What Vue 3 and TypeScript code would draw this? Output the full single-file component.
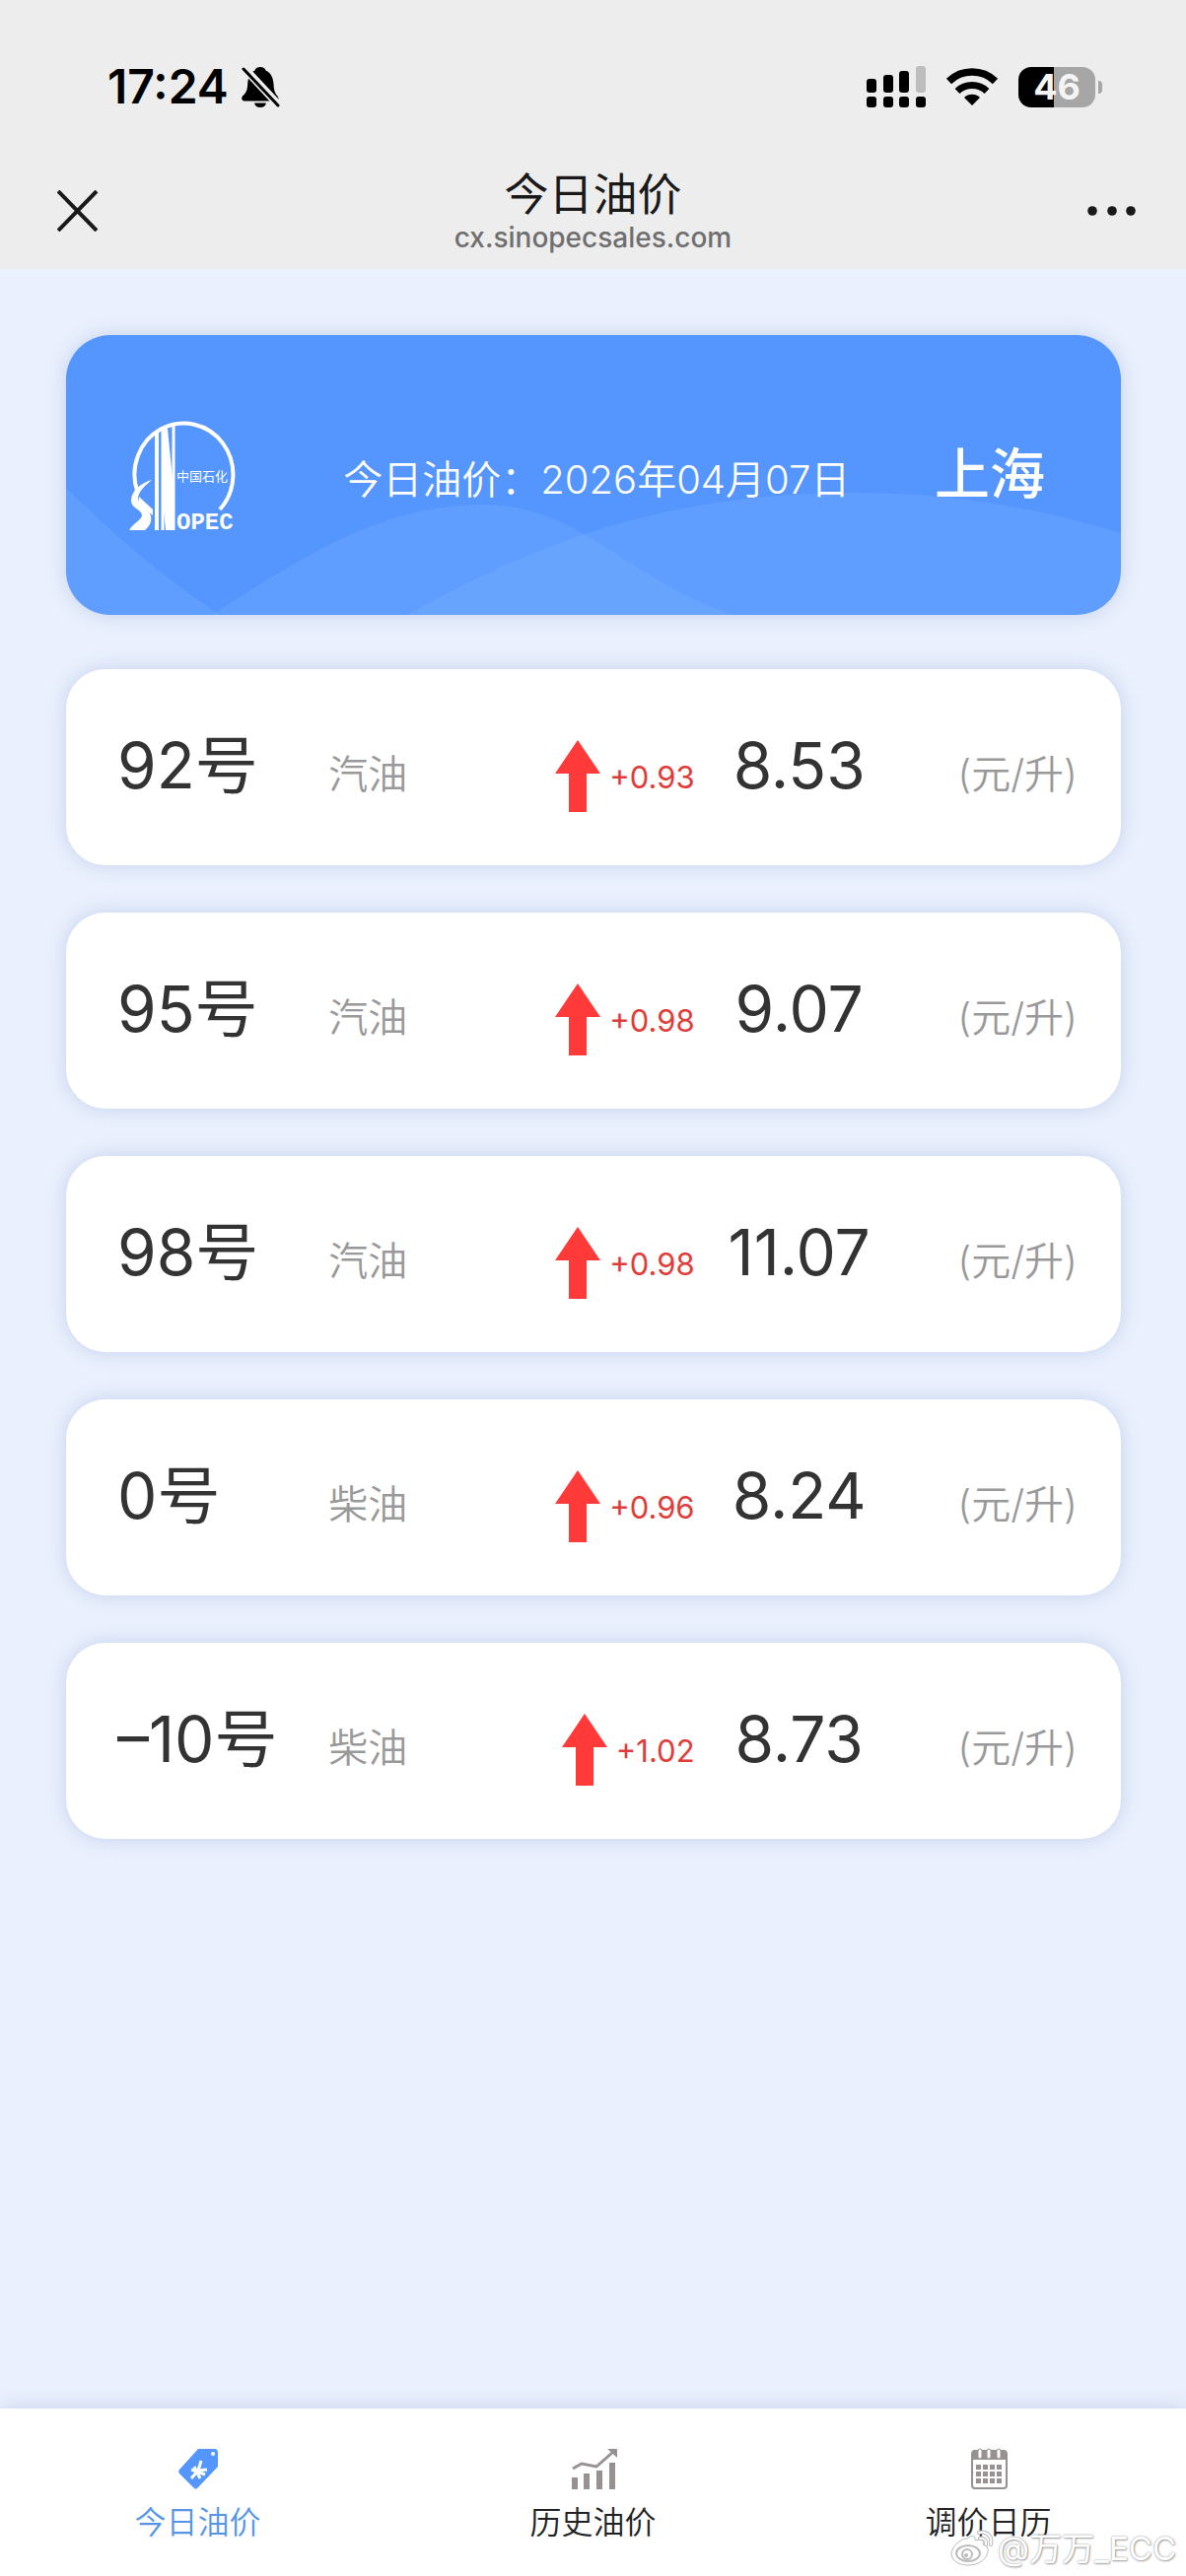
<script setup lang="ts">
import { ref } from 'vue'

interface FuelPrice {
  grade: string
  kind: string
  change: string
  price: string
}

interface Tab {
  id: 'today' | 'history' | 'calendar'
  label: string
}

const date = '2026年04月07日'
const city = '上海'

const prices: FuelPrice[] = [
  { grade: '92号', kind: '汽油', change: '+0.93', price: '8.53' },
  { grade: '95号', kind: '汽油', change: '+0.98', price: '9.07' },
  { grade: '98号', kind: '汽油', change: '+0.98', price: '11.07' },
  { grade: '0号', kind: '柴油', change: '+0.96', price: '8.24' },
  { grade: '–10号', kind: '柴油', change: '+1.02', price: '8.73' },
]

const tabs: Tab[] = [
  { id: 'today', label: '今日油价' },
  { id: 'history', label: '历史油价' },
  { id: 'calendar', label: '调价日历' },
]

const active = ref<Tab['id']>('today')
const calendarCols = [11, 18, 25, 32]
const calendarRows = [17, 24, 31]
</script>

<template>
  <div class="page">
    <header class="top">
      <div class="status">
        <div class="clock">
          <span class="time">17:24</span>
          <svg class="bell" viewBox="0 0 40 42" aria-hidden="true">
            <path d="M19 1c3 0 5 1.500 5.500 3.500C30 7 32 12 32.500 18c.3 6 1 9 4 12.500 1.500 2 1.500 5-1 5H3c-3 0-3.500-3-2-5C5 27 6 24 6.200 18 6.500 11 8.500 6.500 13.500 4.500 14 2.500 16 1 19 1z" />
            <path d="M13 37.500h12c-.5 3-3 4.500-6 4.500s-5.500-1.500-6-4.500z" />
            <path d="M3 2.500 38 40" stroke="#ededed" stroke-width="8" />
            <path d="M2 3 37 40" stroke="#000" stroke-width="3" stroke-linecap="round" />
          </svg>
        </div>
        <div class="indicators">
          <svg class="signal" viewBox="0 0 60 42" aria-hidden="true">
            <rect x="0" y="13" width="10" height="14" rx="3" />
            <rect x="17" y="9" width="10" height="18" rx="3" />
            <rect x="33" y="5" width="10" height="22" rx="3" />
            <rect x="50" y="0" width="10" height="27" rx="3" fill="#bdbdbd" />
            <rect x="0" y="31" width="10" height="11" rx="3" />
            <rect x="17" y="31" width="10" height="11" rx="3" />
            <rect x="33" y="31" width="10" height="11" rx="3" />
            <rect x="50" y="31" width="10" height="11" rx="3" />
          </svg>
          <svg class="wifi" viewBox="0 0 54 40" aria-hidden="true">
            <path d="M3.500 14.500a34 34 0 0 1 47 0" fill="none" stroke="#000" stroke-width="7.500" />
            <path d="M12 24.500a22 22 0 0 1 30 0" fill="none" stroke="#000" stroke-width="7" />
            <path d="M27 39 19 31a11.500 11.500 0 0 1 16 0z" />
          </svg>
          <div class="battery"><span class="cell">46</span><span class="nub"></span></div>
        </div>
      </div>
      <div class="nav">
        <button class="icon-button" type="button" aria-label="关闭">
          <svg class="close" viewBox="0 0 42 42" aria-hidden="true">
            <path d="M1 1 40 41M40 1 1 41" fill="none" stroke="#191919" stroke-width="4" />
          </svg>
        </button>
        <div class="heading">
          <h1 class="title">今日油价</h1>
          <p class="host">cx.sinopecsales.com</p>
        </div>
        <button class="icon-button" type="button" aria-label="更多">
          <svg class="more" viewBox="0 0 50 10" aria-hidden="true">
            <circle cx="5" cy="5" r="4.800" />
            <circle cx="25" cy="5" r="4.800" />
            <circle cx="44" cy="5" r="4.800" />
          </svg>
        </button>
      </div>
    </header>

    <main class="content">
      <section class="hero">
        <svg class="waves" viewBox="0 0 1070 284" preserveAspectRatio="none" aria-hidden="true">
          <path d="M0 155C50 205 105 250 156 284H0z" />
          <path d="M148 284C240 225 320 172 422 172S570 250 678 284z" />
          <path d="M346 284C470 215 600 160 800 160 900 160 990 176 1070 201V284z" />
        </svg>
        <svg class="logo" viewBox="0 0 108 112" role="img" aria-label="中国石化 SINOPEC">
          <g fill="none" stroke="#fff">
            <path d="M8 70A50 52 0 1 1 92 89" stroke-width="4" />
            <path d="M28 11V110" stroke-width="4" />
            <path d="M34 8V110" stroke-width="3" />
            <path d="M45 4V110" stroke-width="3" />
          </g>
          <g fill="#fff">
            <path d="M35 7h4l6 60V110h-8L35 90z" />
            <path d="M23 59C12 62 2 70 2 80c0 8 11 9 11 15 0 4-9 8-13 15h16c6-5 8-11 5-17C18 86 8 84 9 77c1-7 8-13 14-18z" />
            <path d="M10 76 24 89v6L9 83z" />
          </g>
          <text class="script" x="48" y="60">中国石化</text>
          <text class="wordmark" x="48" y="109">OPEC</text>
        </svg>
        <p class="date">今日油价：{{ date }}</p>
        <a class="city" href="#">{{ city }}</a>
      </section>

      <ul class="prices">
        <li v-for="item in prices" :key="item.grade" class="card">
          <span class="grade">{{ item.grade }}</span>
          <span class="kind">{{ item.kind }}</span>
          <span class="change">
            <svg class="arrow" viewBox="0 0 46 73" aria-hidden="true">
              <path d="M23 0 46 34H32V73H14V34H0z" />
            </svg>{{ item.change }}
          </span>
          <span class="price">{{ item.price }}</span>
          <span class="unit">(元/升)</span>
        </li>
      </ul>
    </main>

    <nav class="tabs">
      <button
        v-for="tab in tabs"
        :key="tab.id"
        type="button"
        class="tab"
        :class="{ active: tab.id === active }"
        @click="active = tab.id"
      >
        <svg v-if="tab.id === 'today'" class="tab-icon" viewBox="0 0 48 42" aria-hidden="true">
          <path d="M24 1h16c3 0 4 1 4 4v14L24 40c-2 2-3 2-5 0L5 26c-1-1-1-3 0-4z" fill="#5396fe" />
          <path d="M27 13 24 23M33 22 24 23M24 23 17 31M17 22 31 27M20 19 26 31" fill="none" stroke="#fff" stroke-width="3" />
          <circle cx="39" cy="6" r="2" fill="#fff" />
        </svg>
        <svg v-else-if="tab.id === 'history'" class="tab-icon" viewBox="0 0 48 42" aria-hidden="true">
          <g fill="#989191">
            <path d="M2 30h6v12H2zM14 26h6v16h-6zM27 23h6v19h-6zM40 15h6v27h-6z" />
            <path d="M38 1h10v9z" />
          </g>
          <path d="M3 21 12 16 27 19 44 4" fill="none" stroke="#989191" stroke-width="3" />
        </svg>
        <svg v-else class="tab-icon" viewBox="0 0 48 42" aria-hidden="true">
          <rect x="7" y="5" width="35" height="36" rx="3" fill="#fff" stroke="#989191" stroke-width="2" />
          <path d="M6 12V7c0-3 1-5 4-5h29c3 0 4 2 4 5v5z" fill="#989191" />
          <g fill="#fff" stroke="#989191">
            <rect x="13" y="1" width="4" height="10" rx="2" />
            <rect x="22" y="1" width="4" height="10" rx="2" />
            <rect x="32" y="1" width="4" height="10" rx="2" />
          </g>
          <g fill="#989191">
            <template v-for="y in calendarRows" :key="y">
              <rect v-for="x in calendarCols" :key="x" :x="x" :y="y" width="5" height="5" />
            </template>
          </g>
        </svg>
        <span>{{ tab.label }}</span>
      </button>
    </nav>

    <div class="watermark">
      <svg class="weibo" viewBox="0 0 44 38" aria-hidden="true">
        <path d="M17 9c5-4 9-3 8 2 6-2 10 0 8 4 4 1 6 4 5 8-2 8-10 13-20 13S1 31 1 24C1 18 10 9 17 9z" fill="#fff" stroke="#bbb" />
        <ellipse cx="18" cy="24" rx="12" ry="8" fill="#fff" stroke="#bbb" stroke-width="2" />
        <circle cx="17" cy="25" r="5" fill="#fff" stroke="#bbb" stroke-width="2" />
        <circle cx="16" cy="26" r="2" fill="#bbb" />
        <path d="M29 3c8-2 14 4 12 12M30 9c4-1 7 2 6 6" fill="none" stroke="#bbb" stroke-width="4" stroke-linecap="round" />
        <path d="M29 3c8-2 14 4 12 12M30 9c4-1 7 2 6 6" fill="none" stroke="#fff" stroke-width="2" stroke-linecap="round" />
      </svg>
      <span>@万万_ECC</span>
    </div>
  </div>
</template>

<style>
body {
  margin: 0;
}
</style>

<style scoped>
.page {
  position: relative;
  display: flex;
  flex-direction: column;
  min-height: 100vh;
  background: #eaf0fd;
  color: #333;
  font-family: Inter, "Noto Sans CJK SC", sans-serif;
}

h1,
p,
ul {
  margin: 0;
  padding: 0;
  font-weight: 400;
}

button {
  padding: 0;
  border: 0;
  background: none;
  font: inherit;
  color: inherit;
}

.top {
  background: #ededed;
}

.status {
  display: flex;
  align-items: center;
  justify-content: space-between;
  padding: 58px 85px 0 109px;
  height: 60px;
}

.clock,
.indicators {
  display: flex;
  align-items: center;
}

.clock {
  gap: 13px;
}

.time {
  color: #000;
  font-size: 48px;
  font-weight: 600;
  line-height: 60px;
}

.bell {
  width: 40px;
  height: 42px;
}

.indicators {
  gap: 20px;
}

.signal {
  width: 60px;
  height: 42px;
}

.wifi {
  width: 54px;
  height: 40px;
}

.battery {
  display: flex;
  align-items: center;
  gap: 3px;
}

.cell {
  width: 78px;
  height: 41px;
  border-radius: 13px;
  background: linear-gradient(90deg, #000 46%, #a6a6a6 46%);
  color: #f4f4f4;
  font-size: 36px;
  font-weight: 700;
  line-height: 41px;
  text-align: center;
}

.nub {
  width: 4px;
  height: 13px;
  border-radius: 0 4px 4px 0;
  background: #a6a6a6;
}

.nav {
  display: flex;
  align-items: center;
  justify-content: space-between;
  height: 155px;
  padding: 0 50px;
}

.icon-button {
  display: flex;
  align-items: center;
  justify-content: flex-end;
  width: 50px;
  height: 50px;
  margin-top: 37px;
}

.close {
  width: 42px;
  height: 42px;
}

.more {
  width: 50px;
  height: 10px;
  fill: #191919;
}

.heading {
  margin-top: 36px;
  text-align: center;
}

.title {
  color: #191919;
  font-size: 45px;
  font-weight: 400;
  line-height: 54px;
}

.host {
  color: #6f6f6f;
  font-size: 28px;
  font-weight: 500;
  line-height: 32px;
}

.content {
  flex: 1;
  padding: 67px 66px 67px 67px;
}

.hero {
  position: relative;
  display: grid;
  grid-template-columns: 217fr 599fr auto;
  align-items: center;
  height: 284px;
  margin-bottom: 55px;
  padding: 4px 77px 0 64px;
  box-sizing: border-box;
  overflow: hidden;
  border-radius: 45px;
  background: #5595fe;
  box-shadow: 0 0 20px rgba(80, 115, 185, 0.24);
  color: #fff;
}

.waves {
  position: absolute;
  inset: 0;
  width: 100%;
  height: 100%;
  fill: rgba(120, 180, 255, 0.3);
}

.logo {
  position: relative;
  width: 108px;
  height: 112px;
  overflow: visible;
}

.script {
  fill: #fff;
  font-size: 13px;
}

.wordmark {
  fill: #fff;
  font-family: "Liberation Mono", monospace;
  font-size: 24px;
  font-weight: 700;
}

.date {
  position: relative;
  padding-top: 6px;
  font-size: 40px;
  font-weight: 350;
  line-height: 56px;
}

.city {
  position: relative;
  padding-bottom: 6px;
  color: inherit;
  font-size: 56px;
  font-weight: 500;
  line-height: 80px;
  text-decoration: none;
}

.prices {
  display: flex;
  flex-direction: column;
  gap: 48px;
  list-style: none;
}

.card {
  display: grid;
  grid-template-columns: 214fr 150fr 221fr 212fr 176fr;
  align-items: baseline;
  height: 199px;
  box-sizing: border-box;
  padding: 53px 44px 0 52px;
  border-radius: 40px;
  background: #fff;
  box-shadow: 0 0 20px rgba(80, 115, 185, 0.24);
  white-space: nowrap;
}

.grade,
.price {
  font-size: 64px;
  font-weight: 400;
  line-height: 90px;
}

.kind,
.unit {
  color: #999;
  font-size: 40px;
  font-weight: 350;
}

.change {
  color: #e03c3a;
  font-size: 31px;
  text-align: right;
}

.arrow {
  width: 46px;
  height: 73px;
  margin-right: 9px;
  vertical-align: -24px;
  fill: #ff3a38;
}

.price {
  text-align: center;
}

.unit {
  text-align: right;
}

.tabs {
  display: grid;
  grid-template-columns: repeat(3, 1fr);
  height: 170px;
  background: #fff;
  box-shadow: 0 0 20px rgba(80, 115, 185, 0.24);
}

.tab {
  display: flex;
  flex-direction: column;
  align-items: center;
  gap: 10px;
  padding-top: 40px;
  color: #222;
  font-size: 32px;
  font-weight: 350;
  line-height: 48px;
}

.tab.active {
  color: #5595e6;
}

.tab-icon {
  width: 48px;
  height: 42px;
}

.watermark {
  position: absolute;
  right: 10px;
  bottom: 4px;
  display: flex;
  align-items: center;
  gap: 4px;
  color: #fff;
  font-size: 33px;
  line-height: 48px;
  pointer-events: none;
  text-shadow: 0 0 2px #888, 1px 1px 2px #aaa;
}

.weibo {
  width: 44px;
  height: 38px;
}
</style>
